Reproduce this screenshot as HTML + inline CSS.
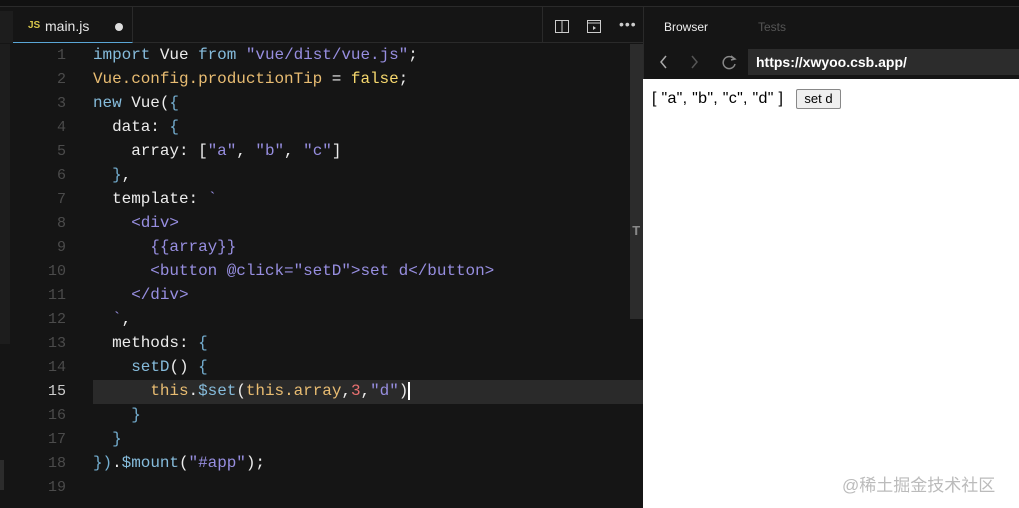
<!DOCTYPE html>
<html><head><meta charset="utf-8"><style>
*{margin:0;padding:0;box-sizing:border-box}
body{width:1019px;height:508px;background:#151515;position:relative;overflow:hidden;font-family:"Liberation Sans",sans-serif}
.top{position:absolute;left:0;top:0;width:1019px;height:7px;background:#111;border-bottom:1px solid #2a2a2a}
.tabbar{position:absolute;left:0;top:7px;width:643px;height:36px;background:#151515;border-bottom:1px solid #2a2a2a}
.tab{position:absolute;left:13px;top:7px;width:120px;height:36px;background:#151515;border-bottom:1px solid #5aa6d6;border-right:1px solid #2a2a2a;color:#e6e6e6;font-size:14px}
.ln{position:absolute;left:30px;width:36px;text-align:right;color:#4b4b4b;font:15px "Liberation Mono",monospace}
.code{position:absolute;left:93px;font:16px "Liberation Mono",monospace;white-space:pre;color:#ececec;letter-spacing:-0.05px}
.k{color:#86bcdc}.s{color:#978ee0}.p{color:#e8bc72}.y{color:#f6d86e}.b{color:#74aed0}.n{color:#e87070}
.rp{position:absolute;left:643px;top:7px;width:376px;height:72px;background:#151515;border-left:1px solid #2a2a2a}
.page{position:absolute;left:643px;top:79px;width:376px;height:429px;background:#fff}
</style></head><body>
<div class="top"></div>
<div class="tabbar">
<div style="position:absolute;left:0;top:4px;width:13px;height:32px;background:#1d1d1d"></div>
<div style="position:absolute;left:542px;top:0;width:1px;height:36px;background:#2a2a2a"></div>
<svg style="position:absolute;left:555px;top:13px" width="14" height="13"><rect x="0.5" y="0.5" width="13" height="12" fill="none" stroke="#ccc"/><line x1="7" y1="0" x2="7" y2="13" stroke="#ccc"/></svg>
<svg style="position:absolute;left:587px;top:13px" width="14" height="13"><rect x="0.5" y="0.5" width="13" height="12" fill="none" stroke="#ccc"/><line x1="0" y1="3" x2="14" y2="3" stroke="#ccc"/><path d="M6 6l3 2-3 2z" fill="#ccc"/></svg>
<div style="position:absolute;left:619px;top:9px;color:#ccc;font-size:14px;letter-spacing:1px">•••</div>
</div>
<div class="tab"><span style="position:absolute;left:15px;top:13px;color:#d7c64a;font-size:10px;font-weight:bold">JS</span><span style="position:absolute;left:32px;top:11px">main.js</span><span style="position:absolute;left:102px;top:16px;width:8px;height:8px;border-radius:4px;background:#ddd"></span></div>
<div style="position:absolute;left:0;top:44px;width:10px;height:300px;background:#1d1d1d"></div>
<div style="position:absolute;left:0;top:460px;width:4px;height:30px;background:#2c2c2c"></div>
<div style="position:absolute;left:93px;top:380px;width:550px;height:24px;background:#2a2a2a"></div>
<div style="position:absolute;left:630px;top:44px;width:13px;height:275px;background:#2c2c2c"></div>
<div style="position:absolute;left:632px;top:224px;width:10px;height:14px;color:#888;font:bold 14px 'Liberation Mono'">T</div>
<div class="ln" style="top:47px">1</div><div class="ln" style="top:71px">2</div><div class="ln" style="top:95px">3</div><div class="ln" style="top:119px">4</div><div class="ln" style="top:143px">5</div><div class="ln" style="top:167px">6</div><div class="ln" style="top:191px">7</div><div class="ln" style="top:215px">8</div><div class="ln" style="top:239px">9</div><div class="ln" style="top:263px">10</div><div class="ln" style="top:287px">11</div><div class="ln" style="top:311px">12</div><div class="ln" style="top:335px">13</div><div class="ln" style="top:359px">14</div><div class="ln" style="top:383px;color:#ccc">15</div><div class="ln" style="top:407px">16</div><div class="ln" style="top:431px">17</div><div class="ln" style="top:455px">18</div><div class="ln" style="top:479px">19</div>
<div class="code" style="top:46px"><span class="k">import</span> Vue <span class="k">from</span> <span class="s">"vue/dist/vue.js"</span>;</div>
<div class="code" style="top:70px"><span class="p">Vue.config.productionTip</span> = <span class="y">false</span>;</div>
<div class="code" style="top:94px"><span class="k">new</span> Vue(<span class="b">{</span></div>
<div class="code" style="top:118px">  data: <span class="b">{</span></div>
<div class="code" style="top:142px">    array: [<span class="s">"a"</span>, <span class="s">"b"</span>, <span class="s">"c"</span>]</div>
<div class="code" style="top:166px">  <span class="b">}</span>,</div>
<div class="code" style="top:190px">  template: <span class="s">`</span></div>
<div class="code s" style="top:214px">    &lt;div&gt;</div>
<div class="code s" style="top:238px">      {{array}}</div>
<div class="code s" style="top:262px">      &lt;button @click="setD"&gt;set d&lt;/button&gt;</div>
<div class="code s" style="top:286px">    &lt;/div&gt;</div>
<div class="code" style="top:310px">  <span class="s">`</span>,</div>
<div class="code" style="top:334px">  methods: <span class="b">{</span></div>
<div class="code" style="top:358px">    <span class="k">setD</span>() <span class="b">{</span></div>
<div class="code" style="top:382px">      <span class="p">this</span>.<span class="k">$set</span>(<span class="p">this.array</span>,<span class="n">3</span>,<span class="s">"d"</span>)<span style="border-left:2px solid #fff"></span></div>
<div class="code" style="top:406px">    <span class="b">}</span></div>
<div class="code" style="top:430px">  <span class="b">}</span></div>
<div class="code" style="top:454px"><span class="b">})</span>.<span class="k">$mount</span>(<span class="s">"#app"</span>);</div>
<div class="rp">
<span style="position:absolute;left:20px;top:13px;color:#eee;font-size:12px">Browser</span>
<span style="position:absolute;left:114px;top:13px;color:#555;font-size:12px">Tests</span>
<svg style="position:absolute;left:14px;top:47px" width="80" height="16"><path d="M8 2l-5 6 5 6" fill="none" stroke="#aaa" stroke-width="1.5"/><path d="M34 2l5 6-5 6" fill="none" stroke="#555" stroke-width="1.5"/><path d="M76 5a6 6 0 1 0 1 5" fill="none" stroke="#888" stroke-width="1.5"/><path d="M73 2l4 3-4 1" fill="none" stroke="#888" stroke-width="1.5"/></svg>
<div style="position:absolute;left:104px;top:42px;width:272px;height:26px;background:#2c2c2c;color:#fff;font-size:14px;font-weight:bold;padding:5px 8px">https://xwyoo.csb.app/</div>
</div>
<div class="page">
<span style="position:absolute;left:9px;top:11px;font-size:16px;color:#000;letter-spacing:0.3px">[ "a", "b", "c", "d" ]</span>
<span style="position:absolute;left:153px;top:10px;width:45px;height:20px;border:1px solid #888;border-radius:2px;background:#efefef;font-size:13px;text-align:center;line-height:18px">set d</span>
<span style="position:absolute;left:199px;top:392px;color:#bbb;font-size:17px;font-family:'Liberation Sans','Noto Sans CJK SC',sans-serif">@稀土掘金技术社区</span>
</div>
</body></html>
